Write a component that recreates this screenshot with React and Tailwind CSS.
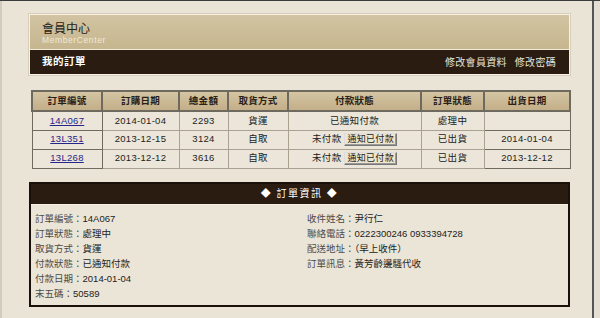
import React from 'react'

const font = { fontFamily: '"Liberation Sans", Arial, "Noto Sans CJK TC", sans-serif' }

const orders = [
  { id: '14A067', date: '2014-01-04', total: '2293', pickup: '貨運', pay: '已通知付款', notify: false, status: '處理中', ship: '' },
  { id: '13L351', date: '2013-12-15', total: '3124', pickup: '自取', pay: '未付款', notify: true, status: '已出貨', ship: '2014-01-04' },
  { id: '13L268', date: '2013-12-12', total: '3616', pickup: '自取', pay: '未付款', notify: true, status: '已出貨', ship: '2013-12-12' },
]

const heads = [
  ['訂單編號', 'w-[70px]'],
  ['訂購日期', 'w-[77px]'],
  ['總金額', 'w-[49px]'],
  ['取貨方式', 'w-[60px]'],
  ['付款狀態', 'w-[133px]'],
  ['訂單狀態', 'w-[63px]'],
  ['出貨日期', 'w-[86px]'],
]

const leftInfo = [
  ['訂單編號', '14A067'],
  ['訂單狀態', '處理中'],
  ['取貨方式', '貨運'],
  ['付款狀態', '已通知付款'],
  ['付款日期', '2014-01-04'],
  ['末五碼', '50589'],
]

const rightInfo = [
  ['收件姓名', '尹行仁'],
  ['聯絡電話', '0222300246 0933394728'],
  ['配送地址', '（早上收件）'],
  ['訂單訊息', '黃芳齡邊騷代收'],
]

function InfoRow({ label, value }) {
  return (
    <div className="h-[15px] leading-[15px] whitespace-nowrap">
      <span className="text-[#4a4a4a]">{label}：</span>
      <span className="text-[#222]">{value}</span>
    </div>
  )
}

export default function App() {
  return (
    <div
      className="w-[600px] h-[318px] overflow-hidden bg-[#e4dfd2] border-t border-[#3c3c3c] flex"
      style={font}
    >
      <div className="w-[594px] h-full bg-[#e9e4d6] border-l-2 border-[#d2ccbc] border-r-2 border-r-[#555] pl-[27px] pt-[13px]">
        {/* Header box */}
        <div className="w-[541px] border border-[#f6f1e2] shadow-[0_0_0_1px_#d7cfbc]">
          <div className="h-[34px] bg-gradient-to-b from-[#d2c4a2] to-[#c6b68f] pl-[12px] pt-[8px]">
            <div className="text-[12px] leading-[13px] text-[#2a2016]">會員中心</div>
            <div className="text-[8.5px] leading-[9px] text-[#efe8d6] tracking-[0.6px]">MemberCenter</div>
          </div>
          <div className="h-[25px] bg-[#2a1c10] border-t border-[#f1ead8] flex items-center justify-between pl-[12px] pr-[13px]">
            <span className="text-[10.5px] font-bold text-white tracking-[0.5px]">我的訂單</span>
            <div className="flex gap-[8px] text-[10px] text-[#e8e2d4] tracking-[0.3px]">
              <span>修改會員資料</span>
              <span>修改密碼</span>
            </div>
          </div>
        </div>

        {/* Orders table */}
        <table className="mt-[15px] ml-[2px] w-[538px] border-collapse table-fixed text-[9.5px] text-[#222] tracking-[0.3px]">
          <thead>
            <tr className="h-[20px]">
              {heads.map(([h, w]) => (
                <th
                  key={h}
                  className={`${w} font-bold bg-gradient-to-b from-[#d4c5a3] to-[#c3af88] border-2 border-[#6e6a60] text-[#2a2016] p-0`}
                >
                  {h}
                </th>
              ))}
            </tr>
          </thead>
          <tbody>
            {orders.map((o) => (
              <tr key={o.id} className="h-[19px] text-center bg-[#ebe6d9]">
                <td className="border border-[#6e6a60] border-t-[#a9a291] p-0">
                  <span className="text-[#25258c] underline">{o.id}</span>
                </td>
                <td className="border border-[#a9a291] p-0">{o.date}</td>
                <td className="border border-[#a9a291] p-0">{o.total}</td>
                <td className="border border-[#a9a291] p-0">{o.pickup}</td>
                <td className="border border-[#a9a291] p-0">
                  <div className="flex items-center justify-center gap-[3px]">
                    <span>{o.pay}</span>
                    {o.notify && (
                      <span className="h-[13px] px-[2px] leading-[11px] text-[9px] bg-[#ede5cd] border border-[#777] border-t-[#ddd] border-l-[#ddd] shadow-[inset_-1px_-1px_0_#999]">
                        通知已付款
                      </span>
                    )}
                  </div>
                </td>
                <td className="border border-[#a9a291] p-0">{o.status}</td>
                <td className="border border-[#6e6a60] border-t-[#a9a291] p-0">{o.ship}</td>
              </tr>
            ))}
          </tbody>
        </table>

        {/* Order info */}
        <div className="mt-[13px] w-[541px] h-[125px] border-2 border-[#1a120a] bg-[#ebe5d7] flex flex-col">
          <div className="h-[20px] bg-[#2a1c10] flex items-center justify-center text-white text-[10px] tracking-[1.5px]">
            ◆ 訂單資訊 ◆
          </div>
          <div className="flex-1 border-t border-[#f4efe2] flex pl-[4px] pt-[6px] text-[9.5px]">
            <div className="w-[272px]">
              {leftInfo.map(([l, v]) => (
                <InfoRow key={l} label={l} value={v} />
              ))}
            </div>
            <div>
              {rightInfo.map(([l, v]) => (
                <InfoRow key={l} label={l} value={v} />
              ))}
            </div>
          </div>
        </div>
      </div>
    </div>
  )
}
